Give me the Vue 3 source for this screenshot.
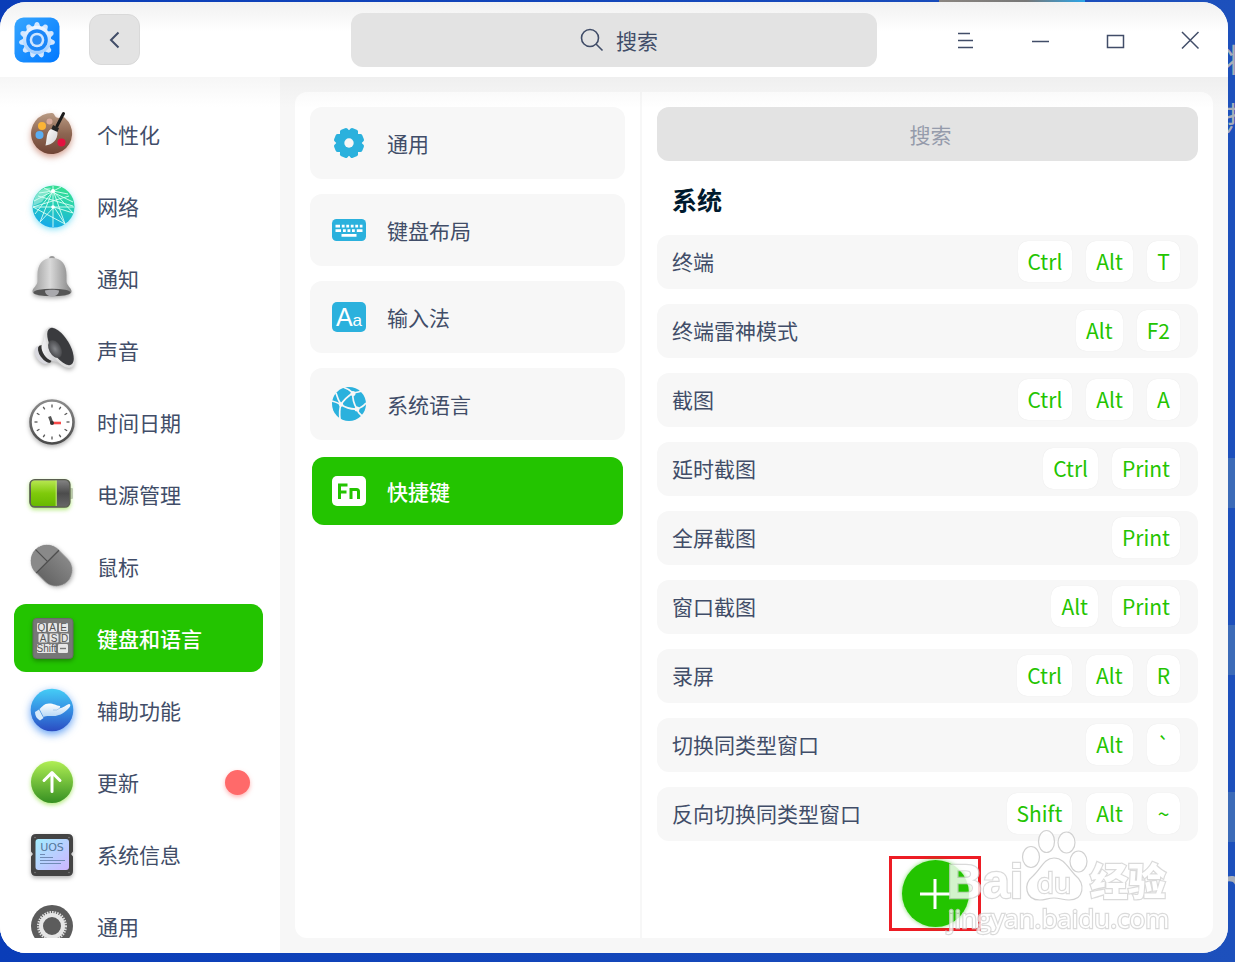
<script setup>
import { ref } from 'vue'

const categories = [
  { id: 'personal', name: '个性化' },
  { id: 'network', name: '网络' },
  { id: 'notify', name: '通知' },
  { id: 'sound', name: '声音' },
  { id: 'time', name: '时间日期' },
  { id: 'power', name: '电源管理' },
  { id: 'mouse', name: '鼠标' },
  { id: 'keyboard', name: '键盘和语言' },
  { id: 'assist', name: '辅助功能' },
  { id: 'update', name: '更新', badge: true },
  { id: 'info', name: '系统信息' },
  { id: 'general', name: '通用' }
]
const pages = [
  { id: 'general', name: '通用' },
  { id: 'layout', name: '键盘布局' },
  { id: 'input', name: '输入法' },
  { id: 'language', name: '系统语言' },
  { id: 'shortcut', name: '快捷键' }
]
const shortcuts = [
  { name: '终端', keys: ['Ctrl', 'Alt', 'T'] },
  { name: '终端雷神模式', keys: ['Alt', 'F2'] },
  { name: '截图', keys: ['Ctrl', 'Alt', 'A'] },
  { name: '延时截图', keys: ['Ctrl', 'Print'] },
  { name: '全屏截图', keys: ['Print'] },
  { name: '窗口截图', keys: ['Alt', 'Print'] },
  { name: '录屏', keys: ['Ctrl', 'Alt', 'R'] },
  { name: '切换同类型窗口', keys: ['Alt', '`'] },
  { name: '反向切换同类型窗口', keys: ['Shift', 'Alt', '~'] }
]
const category = ref('keyboard')
const page = ref('shortcut')
const ticks = Array.from({ length: 12 }, (_, i) => i * 30)
const teeth = Array.from({ length: 11 }, (_, i) => (i * 360) / 11)
const eight = Array.from({ length: 8 }, (_, i) => i * 45 + 22.5)
</script>

<template>
  <div class="desktop">
    <div class="wallpaper" aria-hidden="true">
      <span class="avatar"></span>
      <span class="glyph glyph-a">将</span>
      <span class="glyph glyph-b">热</span>
      <span class="band band-a"></span>
      <span class="band band-b"></span>
      <span class="band band-c"></span>
      <span class="glyph glyph-c">m</span>
    </div>

    <main class="window">
      <header class="titlebar">
        <div class="start">
          <svg class="logo" viewBox="0 0 46 46" aria-hidden="true">
            <defs>
              <linearGradient id="lg" x1="0" y1="0" x2="1" y2="1"><stop offset="0" stop-color="#36a6ff" /><stop offset="1" stop-color="#0078ff" /></linearGradient>
              <linearGradient id="lw" x1="0" y1="0" x2="0" y2="1"><stop offset="0" stop-color="#f2f8ff" /><stop offset="1" stop-color="#9ccbff" /></linearGradient>
            </defs>
            <rect x="0.500" y="0.500" width="45" height="45" rx="9" fill="url(#lg)" />
            <path v-for="t in teeth" :key="t" d="M19.500 10L21 6Q23 3.800 25 6L26.500 10Z" :transform="`rotate(${t} 23 23)`" fill="#d3e7ff" />
            <circle cx="23" cy="23" r="14.200" fill="url(#lw)" />
            <circle cx="23" cy="23" r="10.800" fill="#1b86f8" />
            <circle cx="23" cy="23" r="7.300" fill="#cfe5ff" />
            <circle cx="23" cy="23" r="4.800" fill="#2a8cf5" />
          </svg>
          <button class="back" type="button" aria-label="返回">
            <svg viewBox="0 0 20 20"><path d="M13.500 2.500L6 10L13.500 17.500" /></svg>
          </button>
        </div>
        <label class="search">
          <svg viewBox="0 0 24 24" aria-hidden="true"><circle cx="10" cy="10" r="8.500" /><path d="M16 16L22.500 22.500" /></svg>
          <input type="text" placeholder="搜索" aria-label="搜索" />
        </label>
        <div class="controls">
          <button type="button" aria-label="菜单"><svg viewBox="0 0 20 20"><path d="M3 3.500H15M3 10.500H18M3 17.500H18" /></svg></button>
          <button type="button" aria-label="最小化"><svg viewBox="0 0 20 20"><path d="M2 11.500H19" /></svg></button>
          <button type="button" aria-label="最大化"><svg viewBox="0 0 20 20"><path d="M2.500 5.500H18.500V17.500H2.500Z" /></svg></button>
          <button type="button" aria-label="关闭"><svg viewBox="0 0 20 20"><path d="M2 2L18.500 18.500M18.500 2L2 18.500" /></svg></button>
        </div>
      </header>

      <div class="body">
        <nav class="sidebar">
          <button
            v-for="c in categories"
            :key="c.id"
            type="button"
            class="cat"
            :class="{ active: category === c.id }"
            @click="category = c.id"
          >
            <svg v-if="c.id === 'personal'" class="icon" viewBox="0 0 48 48">
              <defs>
                <linearGradient id="pal" x1="0" y1="0" x2="0" y2="1"><stop offset="0" stop-color="#b99a83" /><stop offset="0.500" stop-color="#8d6652" /><stop offset="1" stop-color="#704435" /></linearGradient>
                <linearGradient id="bris" x1="0" y1="0" x2="1" y2="1"><stop offset="0" stop-color="#ffffff" /><stop offset="1" stop-color="#cfcfcf" /></linearGradient>
              </defs>
              <path class="glow-brown" d="M24 3C27 3 26 8 31 8C34 8 35 6 37 8A20.500 20.500 0 1 1 24 3Z" fill="url(#pal)" />
              <circle cx="14" cy="16" r="4" fill="#fbb435" /><circle cx="11.500" cy="25" r="4" fill="#5aaef2" />
              <circle cx="21.500" cy="11.500" r="3" fill="#d7aa9b" /><circle cx="33.500" cy="32.500" r="4" fill="#e3123f" />
              <path d="M35.500 3.500L29 16" stroke="#1c1c1c" stroke-width="3" stroke-linecap="round" />
              <path d="M25 15L31 18L29 23L23 20Z" fill="#262626" />
              <path d="M23 19C18 22 19 30 17.500 35.500C24 35 30 30 29.500 22Z" fill="url(#bris)" />
            </svg>
            <svg v-else-if="c.id === 'network'" class="icon" viewBox="0 0 48 48">
              <defs><linearGradient id="net" x1="0.700" y1="0" x2="0.400" y2="1"><stop offset="0" stop-color="#37e08f" /><stop offset="0.500" stop-color="#25cdb8" /><stop offset="1" stop-color="#16a9ea" /></linearGradient></defs>
              <circle class="glow-cyan" cx="25.500" cy="24.500" r="21" fill="url(#net)" />
              <path d="M6 18C9 9 16 5 23 6L14 20L5 24Z" fill="#fff" opacity="0.400" />
              <g fill="none" stroke="#d8fff4" stroke-width="1" opacity="0.900">
                <path d="M5 25H46M25 4V45M25 8L12 40M25 8L37 42M11 11L25 9L40 12M25 9L7 32M25 9L45 31L26 25M10 14L45 24M41 14L5 25L37 42M33 5L6 19M16 6L45 20M12 40L26 25L37 42" />
              </g>
              <circle cx="25" cy="9" r="2" fill="#fff" /><circle cx="25" cy="25" r="1.800" fill="#fff" />
            </svg>
            <svg v-else-if="c.id === 'notify'" class="icon" viewBox="0 0 48 48">
              <defs>
                <linearGradient id="bell" x1="0" y1="0" x2="1" y2="0"><stop offset="0" stop-color="#9b9b9b" /><stop offset="0.450" stop-color="#d9d9d9" /><stop offset="1" stop-color="#858585" /></linearGradient>
              </defs>
              <g class="shade">
                <circle cx="24" cy="5" r="3" fill="#999" />
                <path d="M24 4C34 4 38.500 11 38.500 21V27C38.500 32 44 34 43.500 38C43 41 34 42.500 24 42.500C14 42.500 5 41 4.500 38C4 34 9.500 32 9.500 27V21C9.500 11 14 4 24 4Z" fill="url(#bell)" />
              </g>
              <ellipse cx="24" cy="38.500" rx="18.500" ry="3.800" fill="#555" />
              <path d="M17 36.500C20 35.500 28 35.500 31 36.500C31 40 28 42.500 24 42.500C20 42.500 17 40 17 36.500Z" fill="#a9a9ad" />
            </svg>
            <svg v-else-if="c.id === 'sound'" class="icon" viewBox="0 0 48 48">
              <defs>
                <linearGradient id="cone" x1="0" y1="0" x2="1" y2="0"><stop offset="0" stop-color="#f2f2f4" /><stop offset="1" stop-color="#a6a6a8" /></linearGradient>
                <radialGradient id="mem"><stop offset="0" stop-color="#84868a" /><stop offset="1" stop-color="#4a4b4e" /></radialGradient>
              </defs>
              <g class="shade">
                <ellipse cx="14" cy="29" rx="6" ry="10" transform="rotate(-35 14 29)" fill="#d9d9df" />
                <ellipse cx="17" cy="28" rx="5" ry="10" transform="rotate(-35 17 28)" fill="#333" />
                <path d="M18.500 3C15.500 9 17 15 13.500 20C13 26 18 33 24 35C31 36 37 42 43 42L40 30L24 6Z" fill="url(#cone)" />
                <ellipse cx="32" cy="21.500" rx="10.500" ry="23" transform="rotate(-31 32 21.500)" fill="#dedede" />
              </g>
              <ellipse cx="32.500" cy="20.500" rx="9" ry="21" transform="rotate(-31 32.500 20.500)" fill="#3a3b3e" />
              <ellipse cx="27" cy="23" rx="6" ry="9.500" transform="rotate(-28 27 23)" fill="url(#mem)" />
            </svg>
            <svg v-else-if="c.id === 'time'" class="icon" viewBox="0 0 48 48">
              <defs><linearGradient id="rim" x1="0" y1="0" x2="0" y2="1"><stop offset="0" stop-color="#8b8b8b" /><stop offset="1" stop-color="#4b4b4b" /></linearGradient></defs>
              <circle class="shade" cx="24" cy="24" r="21.500" fill="#fff" stroke="url(#rim)" stroke-width="2.600" />
              <path v-for="t in ticks" :key="t" d="M24 6.500V9.500" stroke="#555" stroke-width="1.300" :transform="`rotate(${t} 24 24)`" />
              <path d="M24.500 25H33" stroke="#f84a4a" stroke-width="2.600" /><path d="M21.500 18.500L24 25" stroke="#555" stroke-width="3" /><circle cx="24" cy="25" r="2" fill="#333" />
            </svg>
            <svg v-else-if="c.id === 'power'" class="icon" viewBox="0 0 48 48">
              <defs>
                <linearGradient id="bat" x1="0" y1="0" x2="0" y2="1"><stop offset="0" stop-color="#b7e650" /><stop offset="0.500" stop-color="#7fca0b" /><stop offset="1" stop-color="#68b900" /></linearGradient>
                <linearGradient id="bdk" x1="0" y1="0" x2="0" y2="1"><stop offset="0" stop-color="#858585" /><stop offset="0.500" stop-color="#4c4c4c" /><stop offset="1" stop-color="#686868" /></linearGradient>
              </defs>
              <rect x="40" y="18" width="5" height="11" rx="1" fill="#c7c7c7" />
              <rect class="glow-green" x="1.900" y="9.600" width="40" height="27.500" rx="5" fill="url(#bdk)" stroke="#5a5e50" stroke-width="1.400" />
              <path d="M28.500 10.500H6.500Q3 10.500 3 14V32.500Q3 36 6.500 36H28.500Z" fill="url(#bat)" />
              <path d="M28.200 10.500V36" stroke="#c6ec78" stroke-width="1" />
            </svg>
            <svg v-else-if="c.id === 'mouse'" class="icon" viewBox="0 0 48 48">
              <defs><linearGradient id="mou" x1="0" y1="0" x2="1" y2="0"><stop offset="0" stop-color="#5e5e5e" /><stop offset="1" stop-color="#8e8e8e" /></linearGradient></defs>
              <g transform="rotate(-45 23.500 23.500)">
                <rect class="shade" x="7.500" y="1" width="32" height="45" rx="16" fill="#777" />
                <path d="M7.500 18V17A16 16 0 0 1 39.500 17V18Z" fill="#898989" />
                <path d="M7.500 18H39.500M23.500 1V18" stroke="#4f4f4f" stroke-width="1.300" fill="none" />
                <path d="M8 19H39V30A15.500 15.500 0 0 1 8 30Z" fill="url(#mou)" opacity="0.700" />
              </g>
            </svg>
            <svg v-else-if="c.id === 'keyboard'" class="icon" viewBox="0 0 48 48">
              <rect class="shade" x="5" y="4.500" width="40" height="40" rx="3.500" fill="#777" stroke="#696969" />
              <g fill="#e6e6e6">
                <rect x="9" y="9" width="9" height="9" rx="1.200" /><rect x="20" y="9" width="9" height="9" rx="1.200" /><rect x="31" y="9" width="9" height="9" rx="1.200" />
                <rect x="10.500" y="19.500" width="9" height="9" rx="1.200" /><rect x="21.500" y="19.500" width="9" height="9" rx="1.200" /><rect x="32.500" y="19.500" width="8.500" height="9" rx="1.200" />
                <rect x="9" y="30" width="19" height="9" rx="1.200" /><rect x="30" y="30" width="10" height="9" rx="1.200" />
              </g>
              <g class="caps">
                <text x="13.500" y="17">Q</text><text x="24.500" y="17">A</text><text x="35.500" y="17">E</text>
                <text x="15" y="27.500">A</text><text x="26" y="27.500">S</text><text x="36.700" y="27.500">D</text>
                <text x="18.500" y="38">Shift</text>
              </g>
              <path d="M32 34.500H38" stroke="#777" stroke-width="1.400" />
            </svg>
            <svg v-else-if="c.id === 'assist'" class="icon" viewBox="0 0 48 48">
              <defs>
                <linearGradient id="ast" x1="0" y1="0" x2="0" y2="1"><stop offset="0" stop-color="#45cdf6" /><stop offset="0.500" stop-color="#358fe3" /><stop offset="1" stop-color="#2b4cc2" /></linearGradient>
                <linearGradient id="hnd" x1="0" y1="0" x2="0" y2="1"><stop offset="0" stop-color="#fff" /><stop offset="1" stop-color="#b5d6f5" /></linearGradient>
              </defs>
              <circle class="glow-blue" cx="24" cy="24" r="21.300" fill="url(#ast)" />
              <path d="M11.500 23C14 21 16 17.500 21 17.500C26 17.500 28 19.500 32 20C32.500 21 32 22 31 22.500C35 22 38 19 41 18C43.500 18 42 21.500 40 23C35 28 30 30 26 30C21 30 18 29.500 15.500 31Z" fill="url(#hnd)" />
              <path d="M25 24Q29 25 32 22" fill="none" stroke="#9fc4ea" stroke-width="0.800" />
              <path d="M7 26L11 23.500L15.500 32L12 34.500C9 33 7 30 7 26Z" fill="#d7eafa" />
            </svg>
            <svg v-else-if="c.id === 'update'" class="icon" viewBox="0 0 48 48">
              <defs><linearGradient id="upd" x1="0" y1="0" x2="0" y2="1"><stop offset="0" stop-color="#b0ee54" /><stop offset="1" stop-color="#369022" /></linearGradient></defs>
              <circle class="glow-green" cx="24" cy="24" r="21" fill="url(#upd)" />
              <path d="M24 33.500V15M16 22.500L24 14.500L32 22.500" fill="none" stroke="#fff" stroke-width="3" stroke-linecap="round" stroke-linejoin="round" />
            </svg>
            <svg v-else-if="c.id === 'info'" class="icon" viewBox="0 0 48 48">
              <defs><linearGradient id="scr" x1="0" y1="0" x2="1" y2="1"><stop offset="0" stop-color="#a3edff" /><stop offset="1" stop-color="#cdb5ff" /></linearGradient></defs>
              <path class="shade" d="M8 4H40Q45 4 45 9V21.500L43 24L45 26.500V41Q45 46 40 46H8Q3 46 3 41V26.500L5 24L3 21.500V9Q3 4 8 4Z" fill="#444" />
              <rect x="7.500" y="9" width="33.500" height="31" rx="3" fill="url(#scr)" />
              <text class="chip" x="24" y="21">UOS</text>
              <path d="M12 24.500H17M12 27.500H25M12 30.500H37M12 33.500H33" stroke="#718bb5" stroke-width="1.100" />
              <g fill="#888"><circle cx="7" cy="7.500" r="0.700" /><circle cx="41" cy="7.500" r="0.700" /><circle cx="7" cy="42.500" r="0.700" /><circle cx="41" cy="42.500" r="0.700" /></g>
            </svg>
            <svg v-else class="icon" viewBox="0 0 48 48">
              <circle cx="24" cy="24" r="21" fill="#5c5c5c" />
              <circle cx="24" cy="24" r="13.500" fill="none" stroke="#dedede" stroke-width="3" stroke-dasharray="1.500 1.030" />
              <circle cx="24" cy="24" r="11" fill="none" stroke="#e6e6e6" stroke-width="4" />
            </svg>
            <span>{{ c.name }}</span>
            <i v-if="c.badge" class="badge"></i>
          </button>
        </nav>

        <div class="content">
          <section class="pages">
            <button
              v-for="p in pages"
              :key="p.id"
              type="button"
              class="page"
              :class="{ active: page === p.id }"
              @click="page = p.id"
            >
              <svg v-if="p.id === 'general'" viewBox="0 0 36 36" class="picon">
                <path v-for="t in eight" :key="t" d="M12.500 8L14 4Q14.500 2.800 16 2.800H20Q21.500 2.800 22 4L23.500 8Z" :transform="`rotate(${t} 18 18)`" />
                <circle cx="18" cy="18" r="12.400" /><circle cx="18" cy="18" r="4.700" class="hole" />
              </svg>
              <svg v-else-if="p.id === 'layout'" viewBox="0 0 36 36" class="picon">
                <rect x="1" y="7" width="34" height="22" rx="4.500" />
                <path class="line" d="M4.500 14.200H9M10.800 14.200H13.600M15.300 14.200H18.100M19.800 14.200H22.600M24.300 14.200H27.100M28.800 14.200H31.500M4.500 18.700H10M12 18.700H14.800M16.500 18.700H19.300M21 18.700H23.800M25.800 18.700H31.500M10.500 23.400H25.500" />
              </svg>
              <svg v-else-if="p.id === 'input'" viewBox="0 0 36 36" class="picon">
                <rect x="1" y="3" width="34" height="30" rx="5" />
                <text class="big" x="5" y="27">A</text><text class="small" x="21.500" y="27">a</text>
              </svg>
              <svg v-else-if="p.id === 'language'" viewBox="0 0 36 36" class="picon">
                <circle cx="18" cy="18" r="17" />
                <path class="net" d="M1 15Q5 16 10 18.500Q14 12 22 7M5 7Q7 14 10 18.500Q8 24 9 33M10 18.500Q17 23.500 26 23Q21 15 22 7Q18 3 12 1M22 7Q28 6 31 5M26 23Q32 21 35 17M26 23Q27 27 31 30" />
                <circle class="hole" cx="10" cy="18.500" r="2.200" /><circle class="hole" cx="22" cy="7.500" r="2.500" /><circle class="hole" cx="26" cy="23" r="2.500" />
              </svg>
              <svg v-else viewBox="0 0 36 36" class="picon fn">
                <rect x="1" y="3" width="34" height="30" rx="5" />
                <path d="M8.500 26V12H16.500M8.500 19H15.500M20 26V16.500H25.500Q27.500 16.500 27.500 18.500V26" />
              </svg>
              <span>{{ p.name }}</span>
            </button>
          </section>

          <section class="detail">
            <input class="filter" type="text" placeholder="搜索" aria-label="搜索快捷键" />
            <h2>系统</h2>
            <ul class="rows">
              <li v-for="s in shortcuts" :key="s.name">
                <span>{{ s.name }}</span>
                <span class="keys"><kbd v-for="k in s.keys" :key="k">{{ k }}</kbd></span>
              </li>
            </ul>
            <div class="footer">
              <div class="marked">
                <button class="add" type="button" aria-label="添加">
                  <svg viewBox="0 0 32 32"><path d="M16 1V31M1 16H31" /></svg>
                </button>
              </div>
            </div>
          </section>
        </div>
      </div>
    </main>

    <svg class="watermark" viewBox="0 0 230 112" aria-hidden="true">
      <g class="wm">
        <text class="wm-a" x="3" y="72">Bai</text>
        <ellipse cx="102.500" cy="15.500" rx="8" ry="11" /><ellipse cx="122.500" cy="16.500" rx="8.500" ry="10.500" />
        <ellipse cx="87" cy="31" rx="8.500" ry="10.500" /><ellipse cx="134.500" cy="35.500" rx="8.500" ry="10.500" />
        <path d="M110 32C120 32 124 42 131 49C142 58 140 74 125 74C119 74 116 72 110 72C104 72 101 74 96 74C81 74 79 58 89 50C97 43 100 32 110 32Z" />
        <text class="wm-d" x="110" y="67">du</text>
        <text class="wm-b" x="146" y="69">经验</text>
        <text class="wm-c" x="4" y="102">jingyan.baidu.com</text>
      </g>
    </svg>
  </div>
</template>

<style>
body {
  margin: 0;
}
</style>

<style scoped>
.desktop {
  --green: #23c400;
  --ink: #414d68;
  position: relative;
  box-sizing: border-box;
  height: 100vh;
  min-height: 600px;
  padding: 2px 7px 9px 0;
  overflow: hidden;
  background: linear-gradient(90deg, #0a3db8, #1d50bc);
  font-family: "Noto Sans CJK SC", sans-serif;
  font-size: 21px;
  line-height: 30px;
  color: var(--ink);
}
.wallpaper {
  position: absolute;
  inset: 0;
  overflow: hidden;
}
.avatar {
  position: absolute;
  top: 0;
  right: 150px;
  width: 146px;
  height: 4px;
  background: linear-gradient(90deg, #8a8580, #777 60%, #2ba5e8);
}
.glyph {
  position: absolute;
  left: calc(100% - 10px);
  font-size: 32px;
  line-height: 40px;
  color: #a9afba;
}
.glyph-a { top: 38px; }
.glyph-b { top: 96px; }
.glyph-c {
  top: 864px;
  left: calc(100% - 26px);
  font-size: 64px;
}
.band {
  position: absolute;
  right: 0;
  width: 20px;
  height: 50px;
  background: #3c6bb8;
}
.band-a { top: 458px; }
.band-b { top: 625px; }
.band-c { top: 792px; }

.window {
  position: relative;
  display: flex;
  flex-direction: column;
  height: 100%;
  overflow: hidden;
  border-radius: 26px;
  background: #f7f7f7;
}
button {
  border: 0;
  padding: 0;
  font: inherit;
  color: inherit;
  background: none;
  cursor: pointer;
}
svg {
  display: block;
  flex: none;
}
.titlebar {
  display: grid;
  grid-template-columns: 2fr 3fr 2fr;
  align-items: center;
  flex: none;
  height: 75px;
  background: linear-gradient(#f1f1f1, #fff 30px);
}
.start {
  display: flex;
  align-items: center;
  gap: 29px;
  padding-left: 14px;
}
.logo {
  width: 46px;
  height: 46px;
}
.back {
  display: grid;
  place-items: center;
  box-sizing: border-box;
  width: 51px;
  height: 51px;
  border: 1px solid #d9d9d9;
  border-radius: 12px;
  background: #e3e3e3;
}
.back svg,
.controls svg {
  width: 20px;
  height: 20px;
  fill: none;
  stroke: var(--ink);
  stroke-width: 1.5;
}
.back svg {
  stroke-width: 2;
}
.search {
  display: flex;
  align-items: center;
  justify-content: center;
  gap: 12px;
  height: 54px;
  padding-left: 14px;
  border-radius: 12px;
  background: #e3e3e3;
}
.search svg {
  width: 24px;
  height: 24px;
  fill: none;
  stroke: var(--ink);
  stroke-width: 1.6;
}
.search input {
  width: 46px;
}
.search:focus-within input {
  width: 240px;
}
input {
  box-sizing: border-box;
  border: 0;
  padding: 0;
  outline: 0;
  font: inherit;
  color: inherit;
  background: none;
}
.search input::placeholder {
  color: var(--ink);
  opacity: 1;
}
.controls {
  display: flex;
  justify-content: flex-end;
}
.controls button {
  display: grid;
  place-items: center;
  width: 75px;
  height: 75px;
}
.body {
  display: flex;
  flex: 1;
  min-height: 0;
  background: linear-gradient(#efefef, #f7f7f7 30px);
}
.sidebar {
  display: flex;
  flex-direction: column;
  gap: 4px;
  flex: none;
  box-sizing: border-box;
  width: 280px;
  padding: 23px 17px 0 14px;
  border-bottom: 15px solid #fff;
  overflow: hidden;
  background: linear-gradient(#f6f6f6, #fff 30px);
}
.cat {
  display: flex;
  align-items: center;
  gap: 21px;
  flex: none;
  height: 68px;
  padding: 0 13px 0 14px;
  border-radius: 12px;
  text-align: left;
}
.active {
  background: var(--green);
  color: #fff;
  font-weight: 500;
}
.icon {
  width: 48px;
  height: 48px;
  overflow: visible;
}
.shade { filter: drop-shadow(0 2px 2px rgba(0, 0, 0, 0.3)); }
.glow-brown { filter: drop-shadow(0 3px 3px rgba(170, 70, 40, 0.5)); }
.glow-cyan { filter: drop-shadow(0 2px 3px rgba(20, 200, 240, 0.5)); }
.glow-green { filter: drop-shadow(0 2px 2px rgba(130, 220, 40, 0.6)); }
.glow-blue { filter: drop-shadow(0 3px 4px rgba(30, 120, 240, 0.7)); }
.caps text {
  font: 10px "Liberation Sans", sans-serif;
  fill: #555;
  text-anchor: middle;
}
.chip {
  font: 11px "DejaVu Sans", sans-serif;
  fill: #55779a;
  text-anchor: middle;
}
.badge {
  width: 25px;
  height: 25px;
  margin-left: auto;
  border-radius: 50%;
  background: #ff6a6a;
  box-shadow: 0 2px 4px rgba(255, 106, 106, 0.5);
}
.content {
  display: grid;
  grid-template-columns: minmax(0, 345fr) minmax(0, 571fr);
  flex: 1;
  gap: 2px;
  min-width: 0;
  padding: 15px;
}
.pages,
.detail {
  min-width: 0;
  padding: 15px 15px 0;
  background: linear-gradient(#fafafa, #fff 16px);
}
.pages {
  display: flex;
  flex-direction: column;
  gap: 15px;
  border-radius: 12px 0 0 12px;
}
.detail {
  border-radius: 0 12px 12px 0;
}
.page {
  display: flex;
  align-items: center;
  gap: 20px;
  height: 72px;
  padding-left: 21px;
  border-radius: 12px;
  background: #f7f7f7;
}
.page.active {
  height: 68px;
  margin: 2px;
  padding-left: 19px;
  background: var(--green);
}
.picon {
  width: 36px;
  height: 36px;
  fill: #2bb1dd;
}
.picon .hole { fill: #f7f7f7; }
.picon .line { stroke: #fff; stroke-width: 2.800; fill: none; }
.picon .net { stroke: #f7f7f7; stroke-width: 1.700; fill: none; }
.picon text { font-family: "Liberation Sans", sans-serif; fill: #fff; }
.picon .big { font-size: 25px; }
.picon .small { font-size: 17px; }
.picon.fn { fill: #fff; }
.picon.fn path { fill: none; stroke: var(--green); stroke-width: 3; }

.filter {
  display: block;
  width: 100%;
  height: 54px;
  padding-left: 6px;
  border-radius: 12px;
  text-align: center;
  background: #e3e3e3;
}
.filter::placeholder {
  color: #959bab;
  opacity: 1;
}
h2 {
  margin: 0;
  padding: 18px 15px 16px;
  font-size: 25px;
  line-height: 40px;
  font-weight: 700;
  color: #001a2e;
}
.rows {
  display: flex;
  flex-direction: column;
  gap: 15px;
  margin: 0;
  padding: 0;
  list-style: none;
}
.rows li {
  display: flex;
  align-items: center;
  justify-content: space-between;
  height: 54px;
  padding: 0 18px 2px 15px;
  box-sizing: border-box;
  border-radius: 12px;
  background: #f7f7f7;
}
.keys {
  display: flex;
  gap: 14px;
}
kbd {
  box-sizing: border-box;
  min-width: 33px;
  padding: 5px 10px 6px;
  border-radius: 10px;
  font: inherit;
  text-align: center;
  color: var(--green);
  background: #fff;
  box-shadow: 0 0 1px rgba(0, 0, 0, 0.1);
}
.footer {
  display: flex;
  justify-content: center;
  padding: 15px 0 0 15px;
}
.marked {
  display: grid;
  place-items: center;
  box-sizing: border-box;
  width: 92px;
  height: 75px;
  border: 3px solid #ed1c24;
}
.add {
  display: grid;
  place-items: center;
  width: 67px;
  height: 67px;
  border-radius: 50%;
  background: var(--green);
  box-shadow: 0 0 4px rgba(35, 196, 0, 0.6);
}
.add svg {
  width: 32px;
  height: 32px;
  stroke: #fff;
  stroke-width: 3;
}
.watermark {
  position: absolute;
  right: 61px;
  bottom: 24px;
  width: 230px;
  height: 112px;
  pointer-events: none;
}
.wm {
  fill: rgba(255, 255, 255, 0.75);
  stroke: rgba(190, 190, 190, 0.7);
  stroke-width: 1.2;
}
.wm text {
  fill: #fff;
  stroke: #d2d2d2;
  stroke-width: 2.4;
  paint-order: stroke;
  opacity: 0.8;
}
.wm-a { font: 700 49px "Liberation Sans", sans-serif; }
.wm-b { font: 900 38px "Noto Sans CJK SC", sans-serif; }
.wm-c { font: 26px "Open Sans", sans-serif; }
.wm-d { font: 28px "Open Sans", sans-serif; text-anchor: middle; }
</style>
